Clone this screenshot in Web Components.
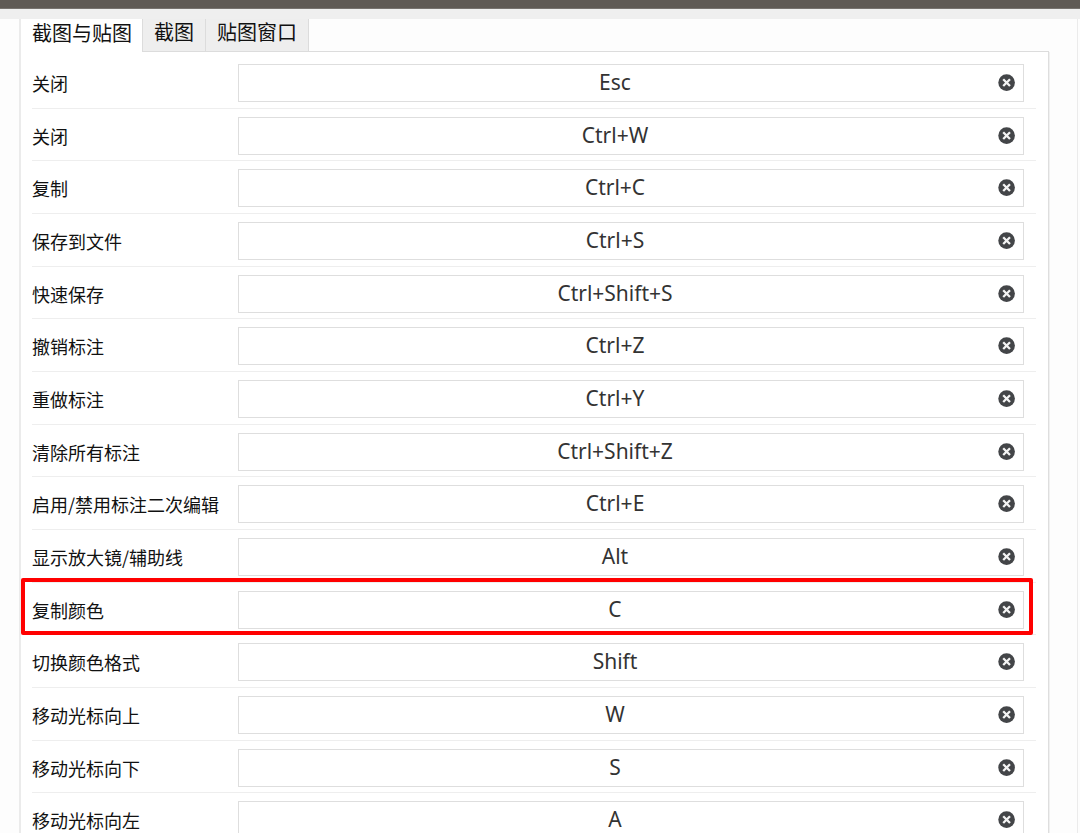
<!DOCTYPE html>
<html lang="zh-CN">
<head>
    <meta charset="utf-8">
    <title>截图与贴图</title>
    <style>
        body {
            margin: 0;
            background: #fdfdfd;
            color: #111;
            font-family: "Noto Sans", "Noto Sans CJK SC", sans-serif;
        }
    </style>
</head>
<body>
    <settings-window>
        <tab-strip slot="tabs">
            <tab-button active>截图与贴图</tab-button>
            <tab-button>截图</tab-button>
            <tab-button>贴图窗口</tab-button>
        </tab-strip>
        <hotkey-row label="关闭" keys="Esc"></hotkey-row>
        <hotkey-row label="关闭" keys="Ctrl+W"></hotkey-row>
        <hotkey-row label="复制" keys="Ctrl+C"></hotkey-row>
        <hotkey-row label="保存到文件" keys="Ctrl+S"></hotkey-row>
        <hotkey-row label="快速保存" keys="Ctrl+Shift+S"></hotkey-row>
        <hotkey-row label="撤销标注" keys="Ctrl+Z"></hotkey-row>
        <hotkey-row label="重做标注" keys="Ctrl+Y"></hotkey-row>
        <hotkey-row label="清除所有标注" keys="Ctrl+Shift+Z"></hotkey-row>
        <hotkey-row label="启用/禁用标注二次编辑" keys="Ctrl+E"></hotkey-row>
        <hotkey-row label="显示放大镜/辅助线" keys="Alt"></hotkey-row>
        <hotkey-row label="复制颜色" keys="C" marked></hotkey-row>
        <hotkey-row label="切换颜色格式" keys="Shift"></hotkey-row>
        <hotkey-row label="移动光标向上" keys="W"></hotkey-row>
        <hotkey-row label="移动光标向下" keys="S"></hotkey-row>
        <hotkey-row label="移动光标向左" keys="A"></hotkey-row>
    </settings-window>

    <script>
        class SettingsWindow extends HTMLElement {
            constructor() {
                super();
                this.attachShadow({ mode: 'open' });

                const template = document.createElement('template');
                template.innerHTML = `
                    <style>
                        :host {
                            display: flex;
                            flex-direction: column;
                            height: 100vh;
                            overflow: hidden;
                        }
                        .bar {
                            flex: none;
                            height: 8px;
                            background: #5f5a55;
                            border-bottom: 1px solid #77736f;
                        }
                        .header {
                            flex: none;
                            height: 10px;
                            background: #efefef;
                        }
                        .window {
                            flex: 1;
                            min-height: 0;
                            margin-right: 2px;
                            padding: 0 28px 0 19px;
                            border-right: 1px solid #ebebeb;
                        }
                        .page {
                            border-left: 2px solid #ebebeb;
                        }
                        .panel {
                            padding: 4px 12px 0 11px;
                            background: #fff;
                            border-right: 1px solid #dedede;
                            box-shadow: 1px 0 0 #f0f0f0;
                        }
                        /* keeps the average row pitch a little under 53px */
                        ::slotted(hotkey-row:nth-of-type(3n + 2)) {
                            height: 51px;
                        }
                    </style>
                    <div class="bar"></div>
                    <div class="header"></div>
                    <div class="window">
                        <div class="page">
                            <slot name="tabs"></slot>
                            <div class="panel"><slot></slot></div>
                        </div>
                    </div>
                `;
                this.shadowRoot.appendChild(template.content.cloneNode(true));
            }
        }

        class TabStrip extends HTMLElement {
            constructor() {
                super();
                this.attachShadow({ mode: 'open' });

                const template = document.createElement('template');
                template.innerHTML = `
                    <style>
                        :host {
                            display: flex;
                            height: 33px;
                        }
                        .rest {
                            flex: 1;
                            border-bottom: 1px solid #dcdcdc;
                        }
                    </style>
                    <slot></slot>
                    <div class="rest"></div>
                `;
                this.shadowRoot.appendChild(template.content.cloneNode(true));
            }
        }

        class TabButton extends HTMLElement {
            constructor() {
                super();
                this.attachShadow({ mode: 'open' });

                const template = document.createElement('template');
                template.innerHTML = `
                    <style>
                        :host {
                            display: flex;
                        }
                        .tab {
                            box-sizing: border-box;
                            padding: 0 11px 6px;
                            border: 0;
                            border-right: 1px solid #dcdcdc;
                            border-bottom: 1px solid #dcdcdc;
                            background: #eee;
                            color: inherit;
                            font: 20px/26px "Noto Sans CJK SC", sans-serif;
                        }
                        :host([active]) .tab {
                            padding: 0 10px 5px 11px;
                            border-bottom: 0;
                            background: #fff;
                        }
                    </style>
                    <button class="tab" type="button"><slot></slot></button>
                `;
                this.shadowRoot.appendChild(template.content.cloneNode(true));
            }
        }

        class HotkeyRow extends HTMLElement {
            constructor() {
                super();
                this.attachShadow({ mode: 'open' });

                const template = document.createElement('template');
                template.innerHTML = `
                    <style>
                        :host {
                            position: relative;
                            display: flex;
                            align-items: flex-start;
                            height: 52px;
                            border-bottom: 1px solid #eee;
                        }
                        .row__label {
                            flex: none;
                            width: 206px;
                            padding-top: 8px;
                            font: 18px/38px "Noto Sans CJK SC", sans-serif;
                            white-space: nowrap;
                        }
                        .row__field {
                            box-sizing: border-box;
                            display: flex;
                            flex: 1;
                            height: 38px;
                            margin: 8px 12px 0 0;
                            border: 1px solid #dedede;
                            background: #fff;
                        }
                        .row__keys {
                            flex: 1;
                            min-width: 0;
                            padding: 0 0 2px;
                            border: 0;
                            outline: 0;
                            background: none;
                            color: #333;
                            font: 21px "Noto Sans", sans-serif;
                            text-align: center;
                        }
                        .row__clear {
                            display: flex;
                            align-items: center;
                            justify-content: center;
                            width: 32px;
                            padding: 0 0 1px;
                            border: 0;
                            background: none;
                        }
                        .row__mark {
                            display: none;
                        }
                        :host([marked]) .row__mark {
                            position: absolute;
                            inset: -5px 3px -1px -11px;
                            display: block;
                            border: 4px solid #f00;
                            border-radius: 2px;
                            pointer-events: none;
                        }
                    </style>
                    <label class="row__label" for="keys"></label>
                    <div class="row__field">
                        <input class="row__keys" id="keys" type="text" readonly>
                        <button class="row__clear" type="button" aria-label="清除">
                            <svg width="18" height="18" viewBox="0 0 18 18">
                                <circle cx="8.6" cy="8.6" r="8.3" fill="#434548"/>
                                <path d="M5.2 5.2l6.8 6.8M12 5.2l-6.8 6.8" stroke="#f4f4f4" stroke-width="2.3"/>
                            </svg>
                        </button>
                    </div>
                    <div class="row__mark"></div>
                `;
                this.shadowRoot.appendChild(template.content.cloneNode(true));
            }

            connectedCallback() {
                this.shadowRoot.querySelector('.row__label').textContent = this.getAttribute('label');
                this.shadowRoot.querySelector('.row__keys').value = this.getAttribute('keys');
            }
        }

        customElements.define('settings-window', SettingsWindow);
        customElements.define('tab-strip', TabStrip);
        customElements.define('tab-button', TabButton);
        customElements.define('hotkey-row', HotkeyRow);
    </script>
</body>
</html>
